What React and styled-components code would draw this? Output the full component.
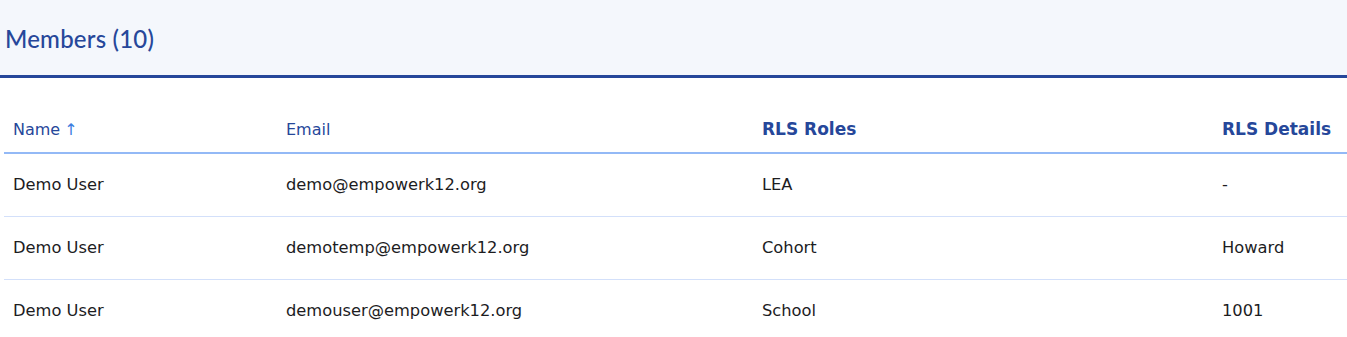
import React from "react";
import styled, { createGlobalStyle } from "styled-components";

const Global = createGlobalStyle`
  html, body { margin: 0; padding: 0; background: #ffffff; }
  body { font-family: "DejaVu Sans", sans-serif; }
`;

const Page = styled.div`
  width: 1347px;
  display: flex;
  flex-direction: column;
`;

const Band = styled.header`
  box-sizing: border-box;
  height: 78px;
  background: #f4f7fc;
  border-bottom: 3px solid #26479a;
  display: flex;
  align-items: center;
  padding: 2px 5px 0 5px;
`;

const Title = styled.h1`
  margin: 0;
  font-family: "Lato", sans-serif;
  font-weight: 500;
  font-size: 24px;
  color: #26479a;
  letter-spacing: 0.2px;
`;

const Table = styled.table`
  margin: 21px 0 0 4px;
  width: 1343px;
  border-collapse: collapse;
  table-layout: fixed;
`;

const HeadCell = styled.th`
  box-sizing: border-box;
  text-align: left;
  padding: 7px 9px 0 9px;
  height: 54px;
  border-bottom: 2px solid #93b9f6;
  font-family: "DejaVu Sans", sans-serif;
  font-weight: ${(p) => (p.$bold ? 700 : 400)};
  font-size: ${(p) => (p.$bold ? "17px" : "16px")};
  color: #26479a;
  vertical-align: middle;
`;

const Arrow = styled.span`
  color: #3d7de0;
  margin-left: 4px;
`;

const Row = styled.tr`
  border-bottom: 1px solid ${(p) => (p.$last ? "transparent" : "#d3e0fa")};
`;

const Cell = styled.td`
  box-sizing: border-box;
  padding: 0 9px;
  height: 63px;
  font-size: 16.3px;
  color: #1d1d1f;
  vertical-align: middle;
`;

const columns = [
  { label: "Name", width: 273, sort: true },
  { label: "Email", width: 476 },
  { label: "RLS Roles", width: 460, bold: true },
  { label: "RLS Details", width: 134, bold: true },
];

const rows = [
  ["Demo User", "demo@empowerk12.org", "LEA", "-"],
  ["Demo User", "demotemp@empowerk12.org", "Cohort", "Howard"],
  ["Demo User", "demouser@empowerk12.org", "School", "1001"],
];

export default function App() {
  return (
    <Page>
      <Global />
      <Band>
        <Title>Members (10)</Title>
      </Band>
      <Table>
        <colgroup>
          {columns.map((c) => (
            <col key={c.label} style={{ width: c.width }} />
          ))}
        </colgroup>
        <thead>
          <tr>
            {columns.map((c) => (
              <HeadCell key={c.label} $bold={c.bold}>
                {c.label}
                {c.sort && <Arrow>↑</Arrow>}
              </HeadCell>
            ))}
          </tr>
        </thead>
        <tbody>
          {rows.map((r, i) => (
            <Row key={i} $last={i === rows.length - 1}>
              {r.map((v, j) => (
                <Cell key={j}>{v}</Cell>
              ))}
            </Row>
          ))}
        </tbody>
      </Table>
    </Page>
  );
}
